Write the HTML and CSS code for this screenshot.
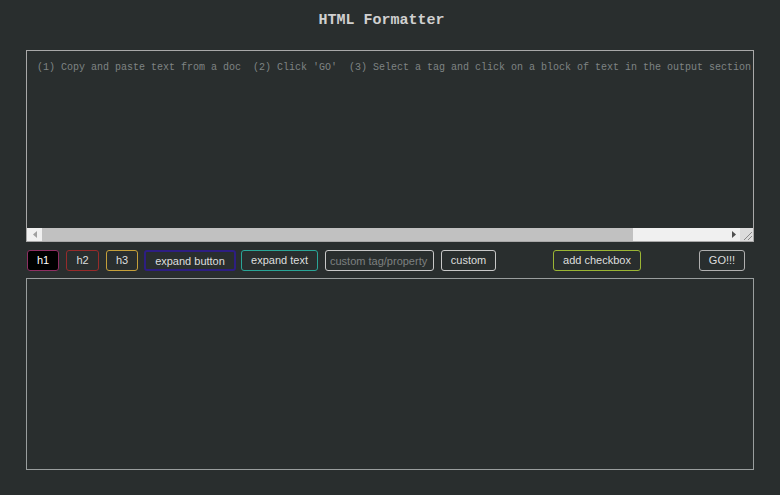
FILE: index.html
```html
<!DOCTYPE html>
<html>
<head>
<meta charset="utf-8">
<link rel="stylesheet" href="styles.css">
</head>
<body>
<div class="page">
  <h1 class="title">HTML Formatter</h1>
  <div class="input-box">
    <textarea class="input" wrap="off" placeholder="(1) Copy and paste text from a doc  (2) Click 'GO'  (3) Select a tag and click on a block of text in the output section"></textarea>
    <div class="hscroll">
      <div class="arrow arrow-left"><svg width="4" height="7" viewBox="0 0 4 7"><path d="M4 0 L0 3.5 L4 7 Z" fill="#a0a0a0"/></svg></div>
      <div class="thumb"></div>
      <div class="track-rest"></div>
      <div class="arrow arrow-right"><svg width="4" height="7" viewBox="0 0 4 7"><path d="M0 0 L4 3.5 L0 7 Z" fill="#505050"/></svg></div>
      <div class="grip"><svg width="13" height="13" viewBox="0 0 13 13"><path d="M4 12 L12 4 M8 12 L12 8" stroke="#888" stroke-width="1"/></svg></div>
    </div>
  </div>
  <div class="toolbar">
    <button class="btn btn-h1">h1</button>
    <button class="btn btn-h2">h2</button>
    <button class="btn btn-h3">h3</button>
    <button class="btn btn-expand">expand button</button>
    <button class="btn btn-text">expand text</button>
    <input class="custom-input" type="text" placeholder="custom tag/property">
    <button class="btn btn-custom">custom</button>
    <button class="btn btn-check">add checkbox</button>
    <button class="btn btn-go">GO!!!</button>
  </div>
  <div class="output"></div>
</div>
</body>
</html>
```
FILE: styles.css
```css
html, body {
  margin: 0;
  padding: 0;
  background: #292e2e;
}
.page {
  padding: 0 26px;
  font-family: "Liberation Sans", Arial, sans-serif;
}
.title {
  margin: 0 0 19px 0;
  padding: 11px 17px 0 0;
  line-height: 20px;
  font-family: "Liberation Mono", "DejaVu Sans Mono", monospace;
  font-size: 15px;
  font-weight: bold;
  color: #d0d0d0;
  text-align: center;
}
.input-box {
  width: 728px;
  height: 192px;
  box-sizing: border-box;
  border: 1px solid #a8a8a8;
  display: flex;
  flex-direction: column;
}
.input {
  display: block;
  width: 100%;
  height: 177px;
  box-sizing: border-box;
  margin: 0;
  border: none;
  outline: none;
  resize: none;
  overflow: hidden;
  background: #292e2e;
  color: #cfcfcf;
  padding: 11px 0 0 10px;
  font-family: "Liberation Mono", "DejaVu Sans Mono", monospace;
  font-size: 10px;
  line-height: 12px;
}
.input::placeholder {
  color: #7f8484;
}
.hscroll {
  height: 13px;
  display: flex;
  background: #f0f0f0;
}
.arrow {
  width: 15px;
  display: flex;
  align-items: center;
  justify-content: center;
}
.thumb {
  width: 591px;
  background: #c1c1c1;
}
.track-rest {
  flex: 1;
}
.arrow-right {
  width: 13px;
}
.grip {
  width: 13px;
  background: #dcdcdc;
}
.grip svg {
  display: block;
}
.toolbar {
  display: flex;
  align-items: center;
  margin: 8px 0 7px 1px;
  height: 21px;
}
.btn {
  height: 21px;
  box-sizing: border-box;
  padding: 0 9px;
  margin: 0 7px 0 0;
  border: 1px solid #aaa;
  border-radius: 3px;
  background: #292e2e;
  color: #dedede;
  font-family: "Liberation Sans", Arial, sans-serif;
  font-size: 11px;
  line-height: 19px;
}
.btn-h1 {
  width: 32px;
  padding: 0;
  background: #000;
  border-color: #8e2f62;
  color: #fff;
  margin-right: 7px;
}
.btn-h2 {
  width: 33px;
  padding: 0;
  border-color: #962b2b;
  margin-right: 7px;
}
.btn-h3 {
  width: 32px;
  padding: 0;
  border-color: #c5a03a;
  margin-right: 6px;
}
.btn-expand {
  width: 92px;
  padding: 0;
  border: 2px solid #2d1e82;
  margin-right: 5px;
}
.btn-text {
  width: 77px;
  padding: 0;
  border-color: #2aa597;
  margin-right: 7px;
}
.custom-input {
  width: 109px;
  height: 21px;
  box-sizing: border-box;
  margin: 0 7px 0 0;
  padding: 0 4px;
  border: 1px solid #c8c8c8;
  border-radius: 3px;
  background: #292e2e;
  color: #e0e0e0;
  font-family: "Liberation Sans", Arial, sans-serif;
  font-size: 11px;
  outline: none;
}
.custom-input::placeholder {
  color: #7d8080;
}
.btn-custom {
  width: 55px;
  padding: 0;
  border-color: #c8c8c8;
  margin-right: 57px;
}
.btn-check {
  width: 88px;
  padding: 0;
  border-color: #9bb534;
  margin-right: 58px;
}
.btn-go {
  width: 46px;
  padding: 0;
  border-color: #b0b0b0;
  margin-right: 0;
}
.output {
  width: 728px;
  height: 192px;
  box-sizing: border-box;
  border: 1px solid #999e9e;
}
```
